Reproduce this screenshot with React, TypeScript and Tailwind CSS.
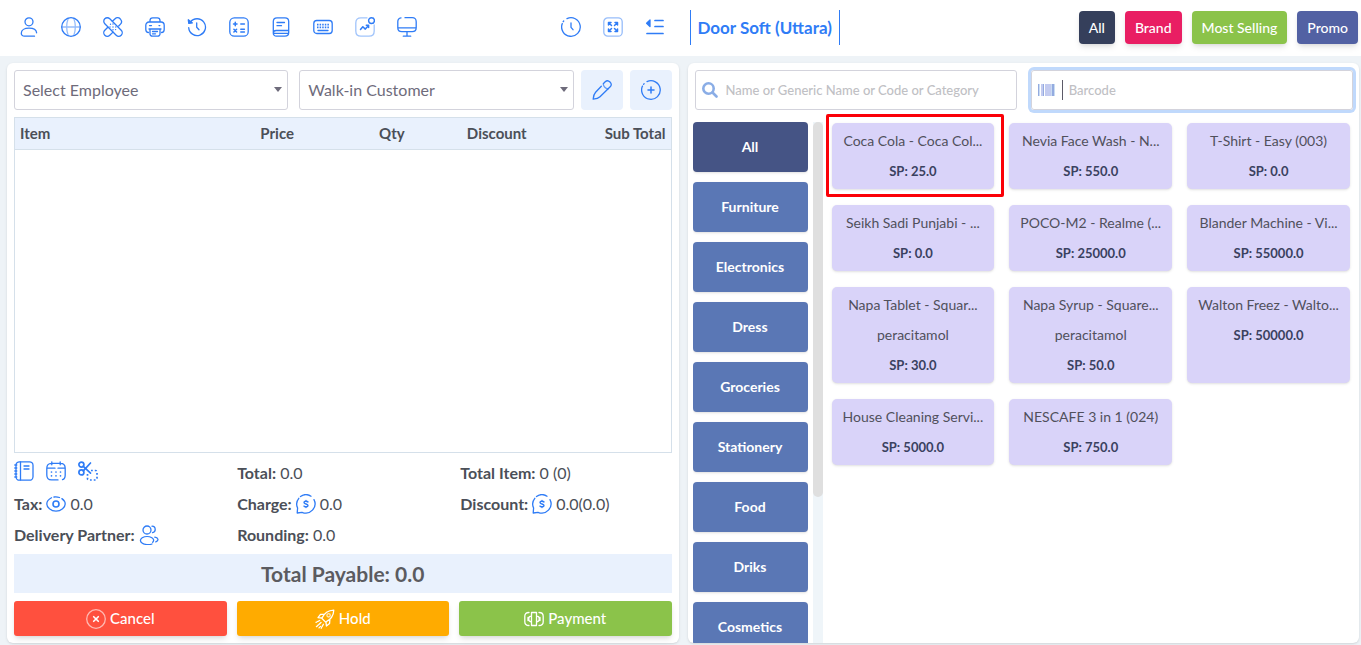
import type { ReactNode } from "react";

type IconProps = { children: ReactNode; className?: string };

function Icon({ children, className = "" }: IconProps) {
  return (
    <svg
      viewBox="0 0 20 20"
      width="20"
      height="20"
      fill="none"
      stroke="currentColor"
      strokeWidth="1.3"
      strokeLinecap="round"
      strokeLinejoin="round"
      aria-hidden="true"
      className={`shrink-0 ${className}`}
    >
      {children}
    </svg>
  );
}

const icons = {
  user: (
    <Icon>
      <circle cx="10" cy="4.8" r="4" />
      <path d="M15.5 19.2H5.5C3.5 19.2 2.3 18 2.3 16.2c0-3 3.2-5 7.7-5 4.3 0 7.4 1.9 7.6 4.6" />
    </Icon>
  ),
  globe: (
    <Icon>
      <circle cx="10" cy="10" r="9.3" />
      <g opacity="0.5">
        <path d="M1 10h18M7.2 1.4c-2 5.6-2 11.6 0 17.2M12.8 1.4c2 5.6 2 11.6 0 17.2" />
      </g>
    </Icon>
  ),
  bandage: (
    <Icon>
      <path d="M1.800 6.800a3.500 3.500 0 0 1 5-5l11.400 11.400a3.500 3.500 0 0 1-5 5z" />
      <path d="M9.400 4.300l2.700-2.600a3.600 3.600 0 0 1 5.500.6 3.600 3.600 0 0 1-.1 4.800L15.700 9M4.800 10.200l-3 3a3.500 3.500 0 0 0 5 5l3.200-3.100" />
      <path strokeWidth="1.400" d="M7.500 7.300v.01M10 7v.01M7 10v.01M10 10v.01M12.800 10v.01M10 12.800v.01M12.600 12.600v.01" />
    </Icon>
  ),
  printer: (
    <Icon>
      <path d="M5 5V3.500A2.700 2.700 0 0 1 7.700.8h4.600A2.700 2.700 0 0 1 15 3.500V5M4 5h12a3.200 3.200 0 0 1 3.200 3.200v4.300c0 2-1 3-2.700 3M3.500 15.500c-1.700 0-2.700-1-2.700-3V8.200A3.200 3.200 0 0 1 4 5" />
      <path d="M5 12v5a2.200 2.200 0 0 0 2.200 2.200h5.600A2.200 2.200 0 0 0 15 17v-5zM4 12h12M4.500 8.600h2M14 8.600h.8M7.500 14.500h5M7.500 16.800h3" />
    </Icon>
  ),
  history: (
    <Icon>
      <path d="M3.300 5.200a8.400 8.400 0 1 1-1.600 5.400" />
      <path d="M1.300 2.800l.5 3.600 3.600-.5z" fill="currentColor" />
      <path d="M9.700 5.800v4.500l2.300 2.500" />
    </Icon>
  ),
  calculator: (
    <Icon>
      <rect x=".8" y=".8" width="18.400" height="18.400" rx="4.500" />
      <path strokeWidth="1.500" d="M4.500 7h3.500M6.250 5.200v3.600M11.800 7h3.600M11.800 12.300h3.600M11.800 15h3.600M4.900 12.300l2.700 2.700M7.600 12.300l-2.700 2.700" />
    </Icon>
  ),
  book: (
    <Icon>
      <path d="M2.300 16V4.500C2.300 2 3.700.8 6 .8h8c2.400 0 3.700 1.300 3.700 3.700v11c0 2.400-1.300 3.700-3.700 3.700H5.500a3 3 0 0 1-3.200-3c0-1.600 1.200-2.700 2.900-2.700h12.500M6 5.500h7.500M6 8.700h4.500M3 16.300h14" />
    </Icon>
  ),
  keyboard: (
    <Icon>
      <rect x=".8" y="3.500" width="18.400" height="13" rx="3" />
      <path d="M5 13.500h10" />
      <path strokeWidth="1.700" strokeLinecap="butt" strokeDasharray="1.500 1.100" d="M4 7.700h12.200M4 10.300h12.200" />
    </Icon>
  ),
  chart: (
    <Icon>
      <path opacity="0.45" d="M12 .8H6C2.500.8.800 2.500.8 6v8c0 3.500 1.700 5.200 5.200 5.200h8c3.500 0 5.200-1.700 5.200-5.200V8" />
      <circle cx="16.500" cy="3.600" r="2.900" strokeWidth="1.400" />
      <path strokeWidth="1.500" d="M5.500 12.500l2.300-2.800 2.500 2.400 3-3.400M11.300 8.300h2.300v2.200" />
    </Icon>
  ),
  monitor: (
    <Icon>
      <path d="M4 .9c-2 .3-3.200 1.500-3.200 3.800v6c0 2.900 1.500 3.900 4 3.900h10.400c2.500 0 4-1 4-3.900v-6c0-2.900-1.500-4-4-4H8M1 10.800h18M10 14.800v4.300M6.300 19.200h7.400" />
    </Icon>
  ),
  clock: (
    <Icon>
      <path d="M6 1.600a9.300 9.300 0 1 1-4.700 5M2.200 4.700l.5-.7M10 6v4.300l2 2.400" />
    </Icon>
  ),
  expand: (
    <Icon>
      <rect opacity="0.5" x=".8" y=".8" width="18.400" height="18.400" rx="4" />
      <path strokeWidth="1.500" d="M5.500 8V5.500H8M5.500 5.500l3 3M12 5.500h2.500V8M14.500 5.500l-3 3M5.500 12v2.500H8M5.500 14.500l3-3M12 14.500h2.500V12M14.500 14.500l-3-3" />
    </Icon>
  ),
  outdent: (
    <Icon>
      <path strokeWidth="1.700" d="M10 3.500h8M10 9.500h8M2 16.500h16" />
      <path d="M5 3v6.500L1.600 6.200z" fill="currentColor" />
    </Icon>
  ),
  pencil: (
    <Icon>
      <path d="M11.500 3.500l1.700-1.700c1.500-1.500 3.200-1.400 4.800.2s1.700 3.300.2 4.800L8 16.700c-1.600 1.600-4.300 2.200-6.800 2.400.1-2.600.8-5.200 2.400-6.900l5.700-6" />
      <path opacity="0.7" d="M11.200 3.800c.4 2.700 2.200 4.600 5 5" />
    </Icon>
  ),
  plus: (
    <Icon>
      <path d="M6 1.600a9.300 9.300 0 1 1-4.500 4.500M2.600 4.300l.5-.6" />
      <path strokeWidth="1.500" d="M10 7v6M7 10h6" />
    </Icon>
  ),
  notebook: (
    <Icon>
      <rect x="2" y=".8" width="17" height="18.400" rx="3.500" />
      <path d="M6.500 1v18M10 5h5M10 8h5M.8 4h2M.8 7h2M.8 10h2M.8 13h2M.8 16h2" />
    </Icon>
  ),
  calendar: (
    <Icon>
      <path d="M5.800.8v3M14.200.8v3M9 7.200H1.500M19.200 7.200H12M12 18.900H5.500C2.200 18.900.8 17 .8 14V7.200c0-3 1.600-4.900 4.700-4.900h9c3.100 0 4.700 1.900 4.700 4.900V14c0 2.500-1 4.200-2.700 4.700" />
      <path strokeWidth="1.700" d="M5.500 11v.01M10 11v.01M14.500 11v.01M5.500 14.800v.01M10 14.800v.01M14.500 14.800v.01" />
    </Icon>
  ),
  scissors: (
    <Icon>
      <g strokeWidth="1.700">
        <circle cx="3.400" cy="3.600" r="2.500" />
        <circle cx="3.400" cy="11.400" r="2.500" />
        <path d="M5.300 9.800L12.500 2M5.300 5.400l7.200 6.800" />
        <path strokeDasharray="1.800 2" strokeLinecap="butt" d="M13 9.500h4.500q1.500 0 1.500 1.500v6.500q0 1.500-1.500 1.500h-6.500q-1.500 0-1.500-1.500V13" />
      </g>
    </Icon>
  ),
  eye: (
    <Icon>
      <circle cx="10" cy="10" r="3" strokeWidth="1.600" />
      <path d="M5.500 3.800C2.500 5.400.8 8 .8 10c0 3.200 4 7.200 9.200 7.200s9.200-4 9.200-7.200c0-1.800-1.200-3.900-3.300-5.400M8 3c2-.4 3.800-.1 5.500.5" />
    </Icon>
  ),
  money: (
    <Icon>
      <path d="M4.500 2.500A9.300 9.300 0 0 1 15 2.200M18 5.600a9.300 9.300 0 0 1-12 12.700L1.200 19l.4-5A9.300 9.300 0 0 1 2.800 4.300" />
      <path strokeWidth="1.400" d="M12 8c-.6-.9-4-1.100-4 .5 0 1.800 4 1.200 4 3 0 1.700-3.500 1.500-4 .6M10 6.500v.5M10 13v.5" />
    </Icon>
  ),
  people: (
    <Icon>
      <circle cx="8" cy="5" r="4" />
      <path d="M13 1.200c2 .1 3.200 1.500 3.200 3.300 0 1.700-1.100 2.900-2.700 3.200M13 19c-2.800 1-7.600.8-10-1-2.200-1.600-2-3.800.2-5.200 2.700-1.700 7-1.700 9.700 0 2 1.200 2.300 3 .8 4.500M15.800 12.200c3.300.4 4.500 3.300 1 4.700" />
    </Icon>
  ),
  cancel: (
    <Icon>
      <circle opacity="0.6" cx="10" cy="10" r="9.300" />
      <path strokeWidth="1.600" d="M7.700 7.700l4.600 4.600M12.300 7.700l-4.600 4.600" />
    </Icon>
  ),
  rocket: (
    <Icon>
      <path d="M6.800 9.300c2.200-4.800 5.700-8 12-8.200-.2 6.300-3.400 9.800-8.200 12zM7 9l-4-.4 2.500-3.200 4.200-.3M11 13l.4 4 3.200-2.500.3-4.200" />
      <circle opacity="0.7" cx="13.600" cy="6.300" r="1.700" />
      <path strokeDasharray="2.500 1.200" d="M4.700 11.500L1 13.300M6 13.500l-4.700 4.300M8.400 15.200l-2.200 4M4 18.900l1.500-1.500" />
    </Icon>
  ),
  cash: (
    <Icon>
      <path d="M5 3.500C2 3.500.8 4.700.8 7.300v5.400c0 2.600 1.200 3.800 4.200 3.800M15 3.500c3 0 4.200 1.200 4.200 3.800v5.400c0 2.600-1.200 3.800-4.200 3.800" />
      <path d="M7.500 3.500h5v13h-5zM7.500 7.200a2.700 2.700 0 0 0 0 5.600M12.500 7.200a2.700 2.700 0 0 1 0 5.600M4 8.500v3M16 8.500v3" />
    </Icon>
  ),
};

const leftTools: [string, ReactNode][] = [
  ["Account", icons.user],
  ["Language", icons.globe],
  ["Fixes", icons.bandage],
  ["Print", icons.printer],
  ["Recent sales", icons.history],
  ["Calculator", icons.calculator],
  ["Register", icons.book],
  ["Keyboard", icons.keyboard],
  ["Statistics", icons.chart],
  ["Display", icons.monitor],
];

const rightTools: [string, ReactNode][] = [
  ["Clock", icons.clock],
  ["Full screen", icons.expand],
  ["Toggle menu", icons.outdent],
];

const categories = ["All", "Furniture", "Electronics", "Dress", "Groceries", "Stationery", "Food", "Driks", "Cosmetics"];

const products: { name: string; generic?: string; price: string; marked?: boolean }[] = [
  { name: "Coca Cola - Coca Col...", price: "25.0", marked: true },
  { name: "Nevia Face Wash - N...", price: "550.0" },
  { name: "T-Shirt - Easy (003)", price: "0.0" },
  { name: "Seikh Sadi Punjabi - ...", price: "0.0" },
  { name: "POCO-M2 - Realme (...", price: "25000.0" },
  { name: "Blander Machine - Vi...", price: "55000.0" },
  { name: "Napa Tablet - Squar...", generic: "peracitamol", price: "30.0" },
  { name: "Napa Syrup - Square...", generic: "peracitamol", price: "50.0" },
  { name: "Walton Freez - Walto...", price: "50000.0" },
  { name: "House Cleaning Servi...", price: "5000.0" },
  { name: "NESCAFE 3 in 1 (024)", price: "750.0" },
];

function ToolButton({ label, children }: { label: string; children: ReactNode }) {
  return (
    <button type="button" aria-label={label} className="text-[#2f7cf6]">
      {children}
    </button>
  );
}

function SelectBox({ label, value }: { label: string; value: string }) {
  return (
    <div className="relative min-w-0 flex-1">
      <select
        aria-label={label}
        className="h-10 w-full appearance-none rounded-[3px] border border-[#d3d3dc] bg-white pl-2 text-base text-[#6e6b7b]"
      >
        <option>{value}</option>
      </select>
      <svg viewBox="0 0 8 5" width="8" height="5" aria-hidden="true" className="pointer-events-none absolute top-[17px] right-[6px]">
        <path d="M0 0h8L4 5z" fill="#6e6b7b" />
      </svg>
    </div>
  );
}

function Header() {
  return (
    <header className="flex h-14 shrink-0 items-center bg-white pb-[2px]">
      <div className="flex w-1/2 items-center justify-between pr-4 pl-[19px]">
        <div className="flex gap-[22px]">
          {leftTools.map(([label, icon]) => (
            <ToolButton key={label} label={label}>{icon}</ToolButton>
          ))}
        </div>
        <div className="flex gap-[22px]">
          {rightTools.map(([label, icon]) => (
            <ToolButton key={label} label={label}>{icon}</ToolButton>
          ))}
        </div>
      </div>
      <div className="flex flex-1 items-center justify-between pr-[3px] pl-[9px]">
        <h1 className="border-x border-[#2f7cf6] px-[7px] text-[17px] leading-[35px] font-bold text-[#2f7cf6]">Door Soft (Uttara)</h1>
        <div className="flex gap-[10px] text-sm leading-[33px] font-medium text-white">
          <button type="button" className="rounded bg-[#353f5b] px-[10px] shadow-md">All</button>
          <button type="button" className="rounded bg-[#e91e63] px-[10px] shadow-md">Brand</button>
          <button type="button" className="rounded bg-[#8bc34a] px-[10px] shadow-md">Most Selling</button>
          <button type="button" className="rounded bg-[#5261a3] px-[10px] shadow-md">Promo</button>
        </div>
      </div>
    </header>
  );
}

function CartPanel() {
  return (
    <section className="flex min-w-0 flex-col rounded-md bg-white p-[7px] shadow">
      <div className="flex gap-[7px]">
        <div className="flex min-w-0 flex-1 gap-[11px]">
          <SelectBox label="Employee" value="Select Employee" />
          <SelectBox label="Customer" value="Walk-in Customer" />
        </div>
        <button type="button" aria-label="Edit customer" className="flex h-10 w-[42px] items-center justify-center rounded bg-[#e9f1fd] text-[#2f7cf6]">
          {icons.pencil}
        </button>
        <button type="button" aria-label="Add customer" className="flex h-10 w-[42px] items-center justify-center rounded bg-[#e9f1fd] text-[#2f7cf6]">
          {icons.plus}
        </button>
      </div>

      <div className="mt-[7px] min-h-[120px] flex-1 border border-[#d5e0ea]">
        <table className="w-full table-fixed text-[15px] leading-[31px] text-[#4b4f58]">
          <thead className="border-b border-[#d5e0ea] bg-[#e9f1fd]">
            <tr>
              <th className="w-[31%] pl-[5px] text-left">Item</th>
              <th className="w-[18%]">Price</th>
              <th className="w-[17%]">Qty</th>
              <th className="w-[15%]">Discount</th>
              <th className="w-[19%] pr-[5px] text-right">Sub Total</th>
            </tr>
          </thead>
        </table>
      </div>

      <div className="mt-1 grid grid-cols-3 gap-x-3 text-base leading-[31px] text-[#4b4f58]">
        <div className="flex items-center gap-3 pb-1">
          <ToolButton label="Notes">{icons.notebook}</ToolButton>
          <ToolButton label="Calendar">{icons.calendar}</ToolButton>
          <ToolButton label="Cut">{icons.scissors}</ToolButton>
        </div>
        <p><b>Total:</b> 0.0</p>
        <p><b>Total Item:</b> 0 (0)</p>
        <div className="flex items-center gap-1">
          <b>Tax:</b>
          <ToolButton label="View tax">{icons.eye}</ToolButton>
          <span>0.0</span>
        </div>
        <div className="flex items-center gap-1">
          <b>Charge:</b>
          <ToolButton label="Edit charge">{icons.money}</ToolButton>
          <span>0.0</span>
        </div>
        <div className="flex items-center gap-1">
          <b>Discount:</b>
          <ToolButton label="Edit discount">{icons.money}</ToolButton>
          <span>0.0(0.0)</span>
        </div>
        <div className="flex items-center gap-1">
          <b>Delivery Partner:</b>
          <ToolButton label="Choose delivery partner">{icons.people}</ToolButton>
        </div>
        <p><b>Rounding:</b> 0.0</p>
      </div>

      <p className="mt-1 bg-[#e9f1fd] text-center text-[21px] leading-[39px] font-bold text-[#5b5b60]">Total Payable: 0.0</p>

      <div className="mt-2 grid grid-cols-3 gap-[10px] text-[15px] font-medium text-white">
        <button type="button" className="flex h-[35px] items-center justify-center gap-1 rounded-[3px] bg-[#ff503e] shadow-md">{icons.cancel}Cancel</button>
        <button type="button" className="flex h-[35px] items-center justify-center gap-1 rounded-[3px] bg-[#ffab00] shadow-md">{icons.rocket}Hold</button>
        <button type="button" className="flex h-[35px] items-center justify-center gap-1 rounded-[3px] bg-[#8bc34a] shadow-md">{icons.cash}Payment</button>
      </div>
    </section>
  );
}

function ProductPanel() {
  return (
    <section className="flex min-h-0 min-w-0 flex-col overflow-hidden rounded-md bg-white pt-[7px] shadow">
      <div className="flex gap-[14px] pr-[6px] pl-[7px]">
        <label className="flex h-10 min-w-0 flex-1 items-center gap-2 rounded-[3px] border border-[#d3d3dc] px-[6px]">
          <svg viewBox="0 0 16 16" width="16" height="16" fill="none" stroke="#8aade6" strokeWidth="2.600" strokeLinecap="round" aria-hidden="true" className="shrink-0">
            <circle cx="6.500" cy="6.500" r="5.200" />
            <path d="M10.500 10.500l4 4" />
          </svg>
          <input
            type="text"
            aria-label="Search products"
            placeholder="Name or Generic Name or Code or Category"
            className="min-w-0 flex-1 pt-px text-[13px] text-[#6e6b7b] outline-none placeholder:font-medium placeholder:text-[#c0c0c4]"
          />
        </label>
        <label className="flex h-10 min-w-0 flex-1 items-center rounded-[3px] border border-[#d3d3dc] px-[6px] ring-3 ring-[#c0d9fc]">
          <svg viewBox="0 0 17 12" width="17" height="12" aria-hidden="true" className="shrink-0">
            <path fill="#c3cbf0" d="M3 0h2v12H3zM7 0h2v12H7zM9 0h4v12H9z" />
            <path fill="#94abe0" d="M0 0h1v12H0zM5 0h1v12H5zM14 0h2v12h-2z" />
            <path fill="#c9dcf2" d="M1 0h1v12H1zM13 0h1v12h-1zM16 0h1v12h-1z" />
          </svg>
          <span className="mr-[6px] ml-[7px] h-5 w-px bg-[#5c5a68]" />
          <input
            type="text"
            aria-label="Barcode"
            placeholder="Barcode"
            className="min-w-0 flex-1 pt-px text-[13px] text-[#6e6b7b] outline-none placeholder:font-medium placeholder:text-[#c0c0c4]"
          />
        </label>
      </div>

      <div className="mt-3 flex min-h-0 flex-1 pl-[5px]">
        <nav className="flex w-[115px] shrink-0 flex-col gap-[10px] overflow-hidden">
          {categories.map((name, i) => (
            <button
              key={name}
              type="button"
              className={`h-[50px] shrink-0 rounded text-sm font-bold text-white shadow-sm ${i === 0 ? "bg-[#455485]" : "bg-[#5a77b5]"}`}
            >
              {name}
            </button>
          ))}
        </nav>
        <div className="ml-[5px] w-[10px] shrink-0 bg-[#eff5f9]">
          <div className="h-[72%] rounded-full bg-[#dfdfdf]" />
        </div>
        <div className="grid min-w-0 flex-1 grid-cols-3 content-start gap-x-[15px] gap-y-4 pt-px pr-[9px] pl-[9px]">
          {products.map((p) => (
            <button
              key={p.name}
              type="button"
              className="relative flex min-w-0 flex-col items-center rounded-[5px] bg-[#d9d3f9] px-2 py-[3px] text-sm leading-[30px] whitespace-nowrap text-[#50505c] shadow-sm"
            >
              <span>{p.name}</span>
              {p.generic && <span>{p.generic}</span>}
              <span className="text-[13px] leading-[30px] font-bold text-[#3a4160]">SP: {p.price}</span>
              {p.marked && <span className="absolute -top-[9px] -right-[10px] -bottom-2 -left-[6px] rounded-[2px] border-3 border-[#fb0007]" />}
            </button>
          ))}
        </div>
      </div>
    </section>
  );
}

export default function App() {
  return (
    <div className="flex h-screen min-h-[560px] flex-col bg-[#eef3f7] font-['Lato',sans-serif]">
      <Header />
      <main className="grid min-h-0 flex-1 grid-cols-2 grid-rows-1 gap-[9px] pt-[7px] pr-[2px] pb-[2px] pl-[7px]">
        <CartPanel />
        <ProductPanel />
      </main>
    </div>
  );
}
